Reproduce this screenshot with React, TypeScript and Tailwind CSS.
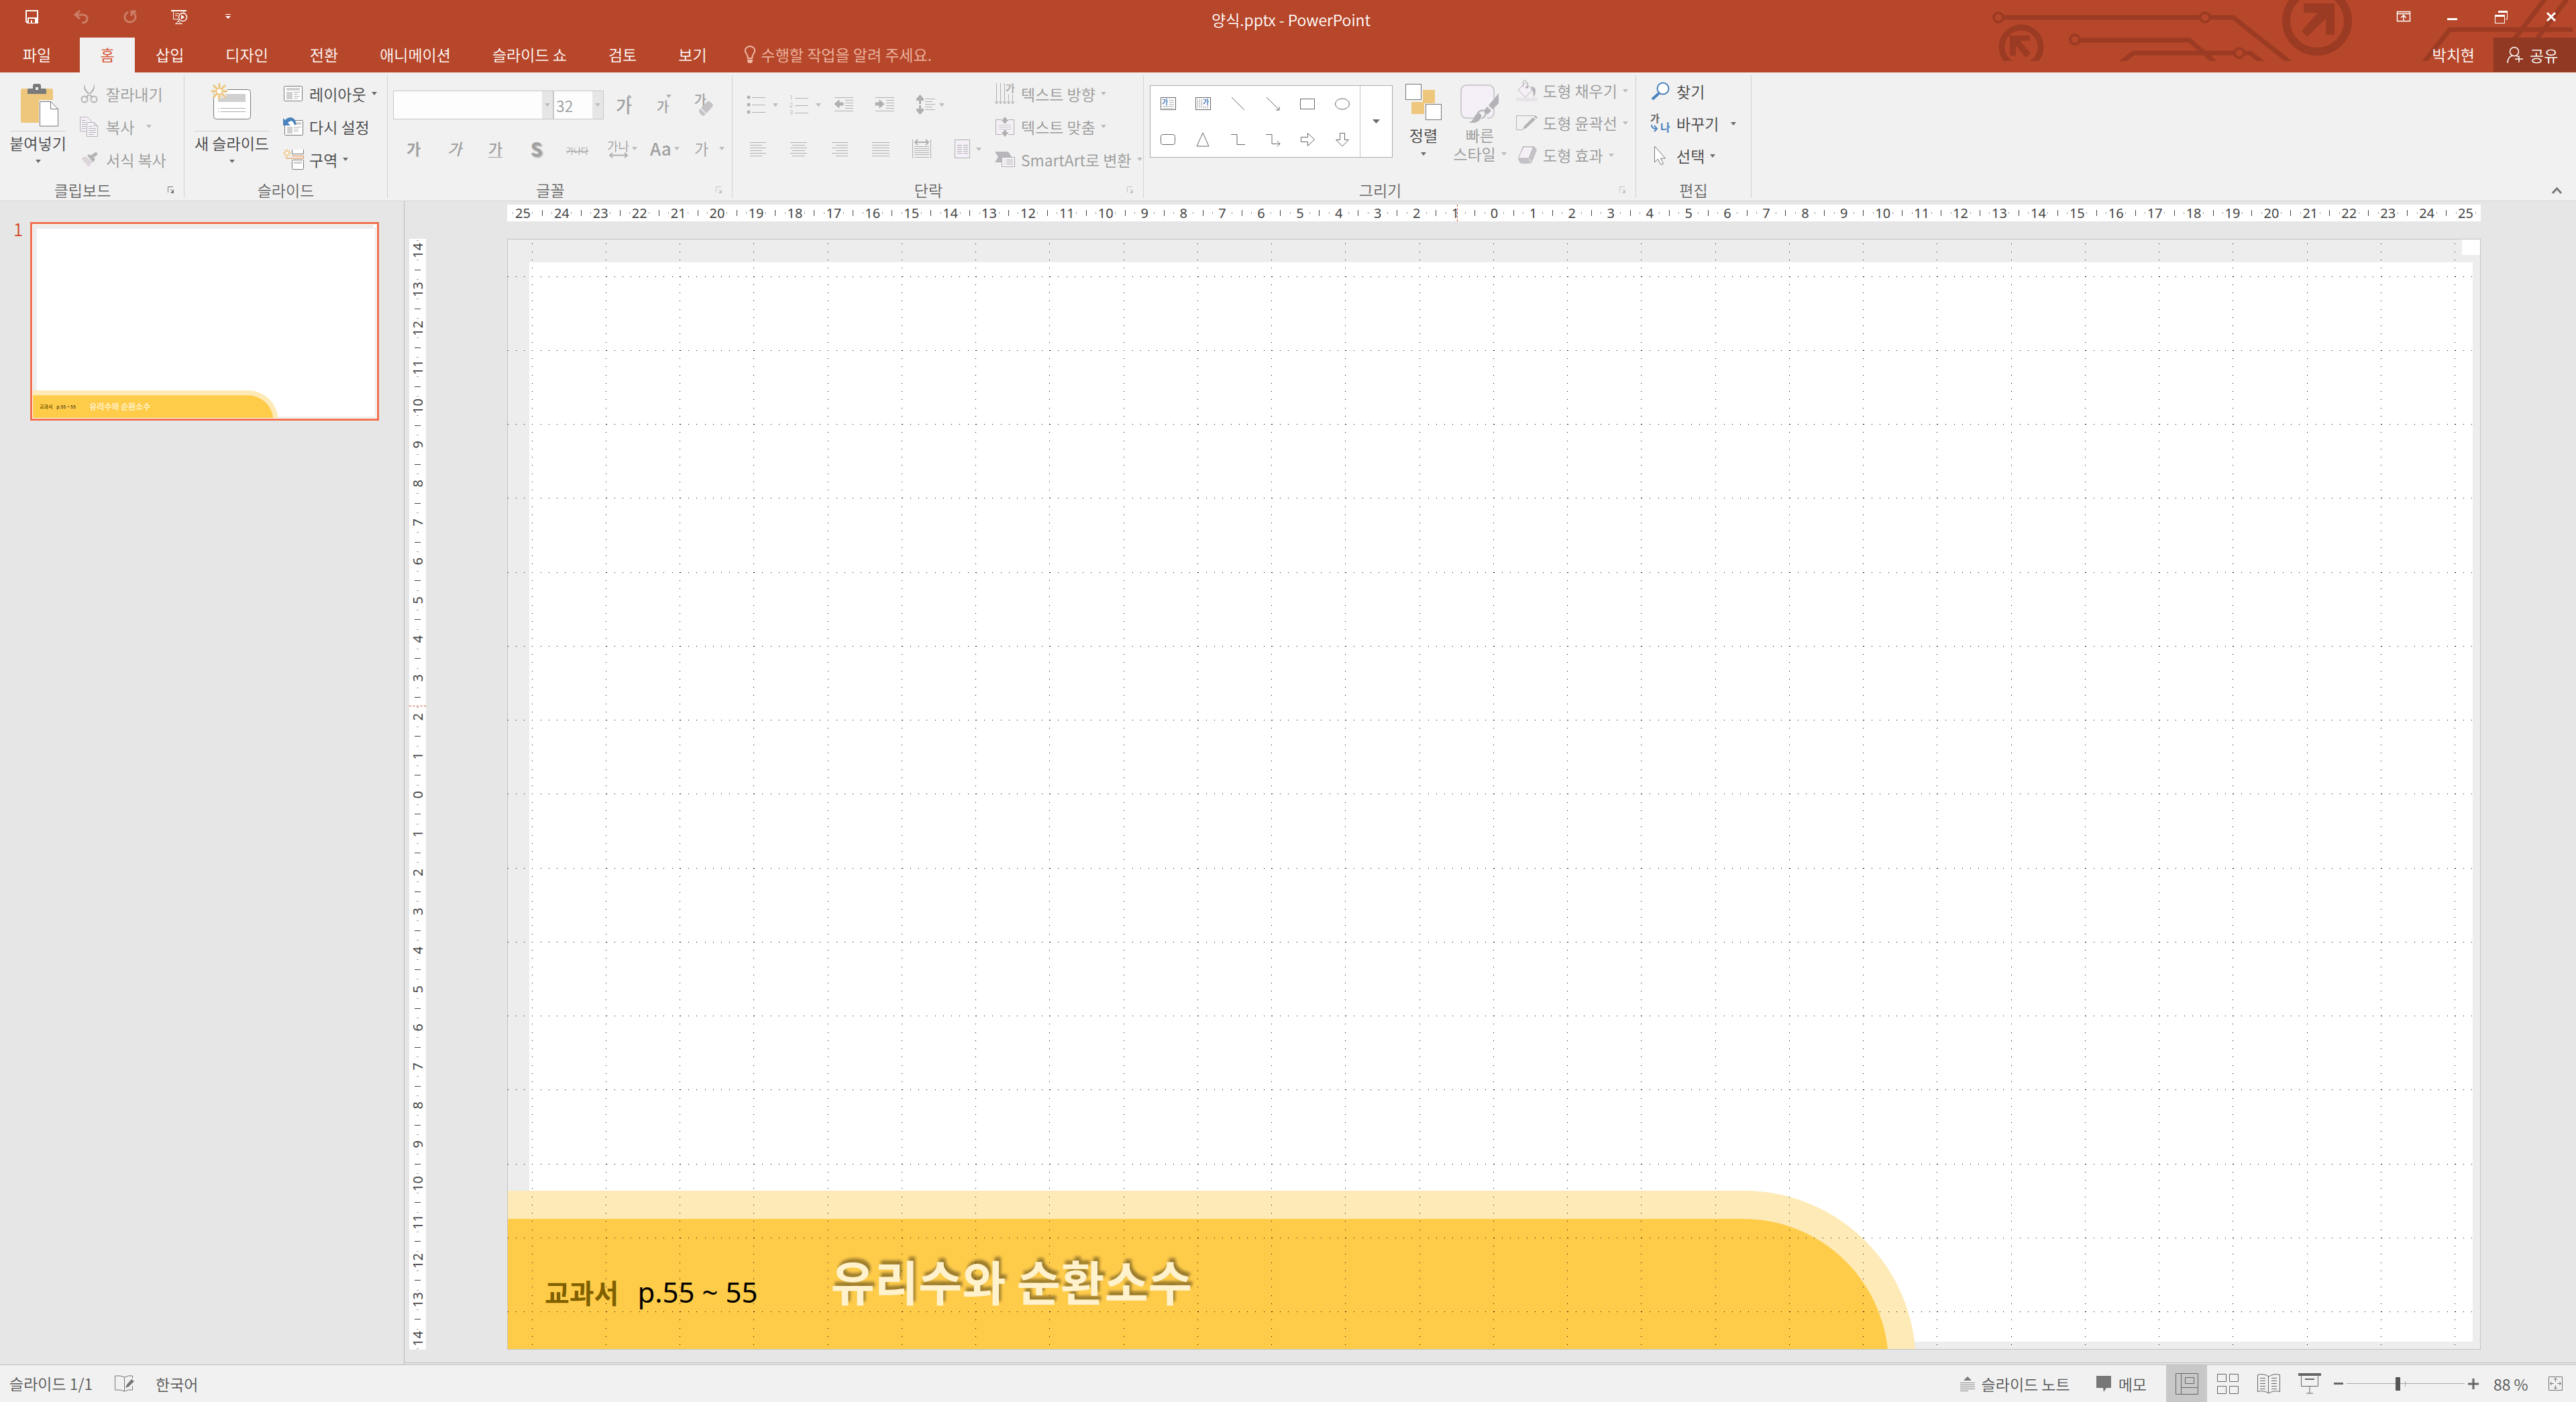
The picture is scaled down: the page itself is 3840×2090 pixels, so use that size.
import type { ReactNode } from 'react';

const menuTabs = ['삽입', '디자인', '전환', '애니메이션', '슬라이드 쇼', '검토', '보기'];

const horizontalMarks = Array.from({ length: 51 }, (_, i) => Math.abs(i - 25));
const verticalMarks = Array.from({ length: 29 }, (_, i) => Math.abs(i - 14));

const gridColumns = Array.from({ length: 27 }, (_, i) => 36 + i * 110.25);
const gridRows = Array.from({ length: 15 }, (_, i) => 55 + i * 110.25);

type IconProps = { w: number; h: number; children: ReactNode; className?: string };

const Icon = ({ w, h, children, className }: IconProps) => (
  <svg
    width={w}
    height={h}
    viewBox={`0 0 ${w} ${h}`}
    fill="none"
    className={`shrink-0 overflow-visible ${className ?? ''}`}
    aria-hidden="true"
  >
    {children}
  </svg>
);

const Arrow = ({ off = false }: { off?: boolean }) => (
  <Icon w={8} h={5}>
    <path d="M0 0h8L4 5z" fill={off ? '#bcbcbc' : '#6a6a6a'} />
  </Icon>
);

/* ---------- clipboard ---------- */

const PasteIcon = () => (
  <Icon w={60} h={64}>
    <rect x="4" y="8" width="48" height="51" rx="3" fill="#eec77d" />
    <path d="M14 16V10q0-2 2-2h6V4q0-3 3-3h6q3 0 3 3v4h6q2 0 2 2v6z" fill="#7a7a7a" />
    <rect x="26" y="6" width="4" height="4" fill="#f1f1f1" />
    <path d="M31 25h21l9 11v28H31z" fill="#f1f1f1" />
    <path d="M32.500 27.500h16l11 11v25.500h-27z" fill="#fff" stroke="#777" />
    <path d="M48.500 27.500v11h11" stroke="#777" />
  </Icon>
);

const CutIcon = () => (
  <Icon w={26} h={29}>
    <path d="M6 0q0 6 4 11l9 9-2 1-8-8Q3 8 6 0zM20 0q0 6-4 11l-9 9 2 1 8-8Q23 8 20 0z" fill="#b4b4b4" />
    <circle cx="6" cy="23" r="4.500" stroke="#b4b4b4" strokeWidth="2" />
    <circle cx="20" cy="23" r="4.500" stroke="#b4b4b4" strokeWidth="2" />
  </Icon>
);

const CopyIcon = () => (
  <Icon w={28} h={30}>
    <path d="M.5.5h11l5 5v16H.5z" fill="#f5f0f7" stroke="#b4b4b4" />
    <path d="M3 5.500h6M3 8.500h6M3 11.500h6M3 14.500h6M3 17.500h6" stroke="#b4b4b4" />
    <path d="M10.500 8.500h11l5 5v16h-16z" fill="#f5f0f7" stroke="#b4b4b4" />
    <path d="M21.500 8.500v5h5M13 14.500h6M13 17.500h11M13 20.500h11M13 23.500h11M13 26.500h8" stroke="#b4b4b4" />
  </Icon>
);

const PainterIcon = () => (
  <Icon w={26} h={22}>
    <path d="M1 9l6-3 11 8-6 8z" fill="#dcd6dc" />
    <path d="M10 5l3-2 9 7-3 5z" fill="#b4b4b4" />
    <path d="M15 5l7-5q4 0 3 4l-7 5z" fill="#b4b4b4" />
  </Icon>
);

/* ---------- slides ---------- */

const NewSlideIcon = () => (
  <Icon w={62} h={58}>
    <rect x="3.500" y="9.500" width="55" height="44" rx="4" fill="#fff" stroke="#777" />
    <rect x="10" y="16" width="41" height="12" fill="#d0d0d0" />
    <path d="M10 37.500h2M14 37.500h37M10 42.500h2M14 42.500h37" stroke="#b0b0b0" />
    <path d="M12 0v24M0 12h24M3 3l18 18M21 3L3 21" stroke="#f1f1f1" strokeWidth="6" />
    <path d="M12 0v24M0 12h24M3 3l18 18M21 3L3 21" stroke="#edc57a" strokeWidth="3" />
    <circle cx="12" cy="12" r="4" fill="#fff" stroke="#edc57a" />
  </Icon>
);

const LayoutIcon = () => (
  <Icon w={28} h={24}>
    <rect x=".5" y=".5" width="27" height="22" rx="1" fill="#fff" stroke="#777" />
    <path d="M4 3h20v4H4zM4 9h9v11H4z" fill="#d0d0d0" />
    <path d="M15 9.500h9M15 12.500h6M15 15.500h9M15 18.500h6" stroke="#b0b0b0" />
  </Icon>
);

const ResetIcon = () => (
  <Icon w={31} h={28}>
    <rect x="2.500" y="4.500" width="27" height="22" rx="1" fill="#fff" stroke="#777" />
    <path d="M16 7h11v4H16zM6 14h8v10H6z" fill="#d0d0d0" />
    <path d="M16 14.500h11M16 17.500h7M16 20.500h7" stroke="#b0b0b0" />
    <path d="M0 1v11h11l-4-4q6-6 9 1l1 2h3Q18 0 11 0 7 0 3 4z" fill="#4a82bd" />
  </Icon>
);

const SectionIcon = () => (
  <Icon w={31} h={31}>
    <path d="M13.500 1v6.500h17V1" fill="#fff" stroke="#777" />
    <path d="M13 10.500h17.500v3.500H4.500v-2" stroke="#e08b45" />
    <rect x="13.500" y="16.500" width="17" height="14" rx="1" fill="#fff" stroke="#777" />
    <path d="M16 19h12v3H16z" fill="#d0d0d0" />
    <path d="M6 0v12M0 6h12M2 2l8 8M10 2l-8 8" stroke="#edc57a" strokeWidth="1.500" />
    <circle cx="6" cy="6" r="2" fill="#fff" />
  </Icon>
);

/* ---------- font ---------- */

const EraserIcon = () => (
  <Icon w={24} h={24}>
    <path d="M13 3q2-3 5 0l3 3q2 2 0 4L12 20 4 12z" fill="#c4c2c6" />
    <path d="M3 13l8 8-2 2q-2 1-4 0l-3-4q-2-2-1-4z" fill="#c4c2c6" />
  </Icon>
);

/* ---------- paragraph ---------- */

const BulletsIcon = () => (
  <Icon w={28} h={28}>
    <g fill="#b0b0b0">
      <circle cx="3" cy="3" r="2.500" />
      <circle cx="3" cy="14" r="2.500" />
      <circle cx="3" cy="25" r="2.500" />
    </g>
    <path d="M8 3.500h20M8 14.500h20M8 25.500h20" stroke="#b0b0b0" />
  </Icon>
);

const NumberingIcon = () => (
  <Icon w={28} h={30}>
    <g fill="#a0a0a0" fontSize="9" fontFamily="Noto Sans">
      <text x="0" y="8">1</text>
      <text x="0" y="19">2</text>
      <text x="0" y="30">3</text>
    </g>
    <path d="M8 5.500h20M8 16.500h20M8 27.500h20" stroke="#b0b0b0" />
  </Icon>
);

const IndentIcon = ({ back = false }: { back?: boolean }) => (
  <Icon w={28} h={22}>
    <path d="M0 .5h28M16 4.500h12M16 8.500h12M16 12.500h12M16 16.500h12M0 20.500h28" stroke="#b0b0b0" />
    <path
      d={back ? 'M0 10l7-6v4h6v4H7v4z' : 'M13 10L6 4v4H0v4h6v4z'}
      fill="#b0b0b0"
      stroke="#b0b0b0"
    />
  </Icon>
);

const LineSpacingIcon = () => (
  <Icon w={28} h={30}>
    <path d="M5.500 0L0 6v3h4v5h3V9h4V6zM5.500 30L0 24v-3h4v-5h3v5h4v3z" fill="#b0b0b0" />
    <path d="M13 6.500h15M13 10.500h11M13 14.500h15M13 18.500h11M13 22.500h15" stroke="#b0b0b0" />
  </Icon>
);

const alignLines = {
  left: 'M2 1.500h24M2 5.500h18M2 9.500h24M2 13.500h18M2 17.500h24M2 21.500h18',
  center: 'M1 1.500h25M4 5.500h19M1 9.500h25M4 13.500h19M1 17.500h25M4 21.500h19',
  right: 'M2 1.500h24M8 5.500h18M2 9.500h24M8 13.500h18M2 17.500h24M8 21.500h18',
  justify: 'M1 1.500h26M1 5.500h26M1 9.500h26M1 13.500h26M1 17.500h26M1 21.500h26',
};

const AlignIcon = ({ kind }: { kind: keyof typeof alignLines }) => (
  <Icon w={28} h={23}>
    <path d={alignLines[kind]} stroke="#b0b0b0" />
  </Icon>
);

const DistributeIcon = () => (
  <Icon w={28} h={28}>
    <path d="M.5 0v28M27.500 0v28M3 10.500h22M3 13.500h22M3 16.500h22M3 19.500h22M3 22.500h22M3 26.500h22" stroke="#b0b0b0" />
    <path d="M4 4h20M8 0L4 4l4 4M20 0l4 4-4 4" stroke="#b0b0b0" strokeWidth="2" />
  </Icon>
);

const ColumnsIcon = () => (
  <Icon w={28} h={28}>
    <rect x="2.500" y=".5" width="22" height="27" fill="#f5f0f7" stroke="#b0b0b0" />
    <path
      d="M6 8.500h7M15 8.500h7M6 11.500h7M15 11.500h7M6 14.500h7M15 14.500h7M6 17.500h7M15 17.500h7M6 20.500h7M15 20.500h7"
      stroke="#b0b0b0"
    />
  </Icon>
);

const TextDirectionIcon = () => (
  <Icon w={30} h={32}>
    <path d="M2.500 0v30M8.500 0v30M14.500 0v30M20.500 17v13M26.500 17v13" stroke="#b0b0b0" />
    <path d="M0 27l2.500 4L5 27M6 27l2.500 4 2.500-4M12 27l2.500 4 2.500-4M18 27l2.500 4 2.500-4M24 27l2.500 4 2.500-4" stroke="#b0b0b0" />
    <text x="16" y="13" fontSize="15" fontWeight="700" fill="#b0b0b0">가</text>
  </Icon>
);

const TextAlignIcon = () => (
  <Icon w={30} h={30}>
    <rect x="1.500" y="4.500" width="27" height="22" fill="#f5f0f7" stroke="#b0b0b0" />
    <path d="M6 12.500h18M6 15.500h18M6 18.500h18" stroke="#c8c8c8" />
    <path d="M10 1h10v8H10zM10 22h10v8H10z" fill="#f1f1f1" />
    <path d="M15 0l-5 6v1h3v3h4V7h3V6zM15 30l-5-6v-1h3v-3h4v3h3v1z" fill="#b0b0b0" />
  </Icon>
);

const SmartArtIcon = () => (
  <Icon w={30} h={24}>
    <path d="M0 0h20l5 8H10v8H0l5-8z" fill="#b8b6ba" />
    <rect x="10.500" y="8.500" width="19" height="14" fill="#f5f0f7" stroke="#b0b0b0" />
    <path d="M14 12.500h1M17 12.500h10M14 15.500h1M17 15.500h10M14 18.500h1M17 18.500h10" stroke="#b0b0b0" />
  </Icon>
);

/* ---------- drawing ---------- */

const shapeIcons: { name: string; art: ReactNode }[] = [
  {
    name: '텍스트 상자',
    art: (
      <>
        <rect x="1.500" y="2.500" width="22" height="18" fill="#fff" />
        <text x="3" y="13" fontSize="10" fontWeight="700" fill="#4a82bd" stroke="none">가</text>
        <path d="M14 6.500h7M14 9.500h7M14 12.500h7M4 15.500h17M4 18.500h17" stroke="#b0b0b0" />
      </>
    ),
  },
  {
    name: '세로 텍스트 상자',
    art: (
      <>
        <rect x="1.500" y="2.500" width="22" height="18" fill="#fff" />
        <text x="12" y="13" fontSize="10" fontWeight="700" fill="#4a82bd" stroke="none">가</text>
        <path d="M4.500 5v13M7.500 5v13M10.500 5v13M13.500 15v4M16.500 15v4M19.500 15v4" stroke="#b0b0b0" />
      </>
    ),
  },
  { name: '선', art: <path d="M3 2l19 19" /> },
  { name: '화살표', art: <path d="M3 2l19 19M22 16v5h-5" /> },
  { name: '직사각형', art: <rect x="1.500" y="4.500" width="21" height="15" /> },
  { name: '타원', art: <ellipse cx="12" cy="12" rx="10.500" ry="8" /> },
  { name: '둥근 직사각형', art: <rect x="1.500" y="4.500" width="21" height="15" rx="3" /> },
  { name: '삼각형', art: <path d="M12 2l9 20H3z" /> },
  { name: '꺾인 연결선', art: <path d="M2 4.500h9v15h12" /> },
  { name: '꺾인 화살표', art: <path d="M2 4.500h9v14h12M19 14l4 4.500-4 4" /> },
  { name: '오른쪽 화살표', art: <path d="M2.500 8.500h10v-6l10 9.500-10 9.500v-6h-10z" /> },
  { name: '아래쪽 화살표', art: <path d="M8.500 2.500h7v10h6L12 22 2.500 12.500h6z" /> },
];

const ArrangeIcon = () => (
  <Icon w={56} h={56}>
    <path d="M26 10h19v21H26v15H10V26h16z" fill="#eec77d" />
    <path d="M0 0h27v28H0zM29 30h27v26H29z" fill="#f1f1f1" />
    <path d="M27 10h18v20H29v16H10V28h17z" fill="#eec77d" />
    <rect x="1.500" y="1.500" width="23" height="23" fill="#fff" stroke="#777" />
    <rect x="31.500" y="31.500" width="23" height="23" fill="#fff" stroke="#777" />
  </Icon>
);

const QuickStyleIcon = () => (
  <Icon w={58} h={60}>
    <rect x="1" y="1" width="49" height="49" rx="8" fill="#f5f0f7" stroke="#c0bec2" strokeWidth="1.500" />
    <path d="M58 12L33 38 12 58h22q8-5 6-14L58 26z" fill="#f1f1f1" />
    <path d="M57 13v15L48 37l-6-6zM40 33l6 6-6 6-5-6z" fill="#b4b2b6" />
    <path d="M12 57q6-2 9-9 2-5 8-5 4 3 1 8-4 6-11 6z" fill="#b4b2b6" />
    <path d="M25 44q5-8 12-4 2 7-5 11" stroke="#b4b2b6" strokeWidth="2" />
  </Icon>
);

const FillIcon = () => (
  <Icon w={32} h={32}>
    <path d="M3 15L14 4l10 11-10 11z" fill="#f5f0f7" stroke="#b4b2b6" />
    <path d="M10.500 11V3q0-3 3-2t4 5v5" stroke="#b4b2b6" />
    <circle cx="16" cy="11" r="2" fill="#b4b2b6" />
    <path d="M22 10q7 0 7 7 0 5-3 9 0-9-4-16z" fill="#b4b2b6" />
    <rect x="0" y="27" width="32" height="5" fill="#e8e3e8" />
  </Icon>
);

const OutlineIcon = () => (
  <Icon w={32} h={22}>
    <path d="M28 .5H.5v21h10" stroke="#b4b2b6" />
    <path d="M25 3l4 3-14 13-5 2 2-5z" fill="#b4b2b6" />
    <path d="M27 2l2-2 3 3-2 2z" fill="#b4b2b6" />
  </Icon>
);

const EffectsIcon = () => (
  <Icon w={32} h={28}>
    <path d="M10 1h16q3 1 5 6l-8 19-5 1H8q-3-1-5-7z" fill="#c4c2c6" />
    <path d="M11 2h14q1 0 0 2l-6 15H5q-2 0-1-2z" fill="#f5f0f7" stroke="#b4b2b6" />
    <path d="M19 19l3 6" stroke="#f1f1f1" />
  </Icon>
);

/* ---------- editing ---------- */

const FindIcon = () => (
  <Icon w={28} h={28}>
    <circle cx="18" cy="10" r="8.500" fill="#fff" stroke="#4a82bd" strokeWidth="2" />
    <path d="M12 17L2 26" stroke="#4a82bd" strokeWidth="4" />
  </Icon>
);

const ReplaceIcon = () => (
  <Icon w={30} h={30}>
    <text x="0" y="13" fontSize="15" fontWeight="700" fill="#666">가</text>
    <text x="15" y="27" fontSize="16" fontWeight="700" fill="#4a82bd">나</text>
    <path d="M2 17q0 6 7 6M6 18l4 5-4 4" stroke="#4a82bd" strokeWidth="2" />
  </Icon>
);

const SelectIcon = () => (
  <Icon w={20} h={30}>
    <path d="M1.500 1v24l5-5 4 8q3 1 4-1l-4-8h7z" fill="#fff" stroke="#777" />
  </Icon>
);

/* ---------- building blocks of the ribbon ---------- */

type GroupProps = { label: string; width: string; launcher?: 'on' | 'off'; children: ReactNode };

const Group = ({ label, width, launcher, children }: GroupProps) => (
  <section className={`flex shrink-0 flex-col border-r border-[#d2d2d2] ${width}`} aria-label={label}>
    <div className="flex h-[159px]">{children}</div>
    <div className="flex h-6 items-center">
      <span className="flex-1 text-center leading-6 text-[#666]">{label}</span>
      {launcher && (
        <button className="flex w-7 pl-1" aria-label={`${label} 옵션`}>
          <Icon w={10} h={10} className={launcher === 'on' ? 'text-[#777]' : 'text-[#c4c4c4]'}>
            <path d="M.5 9V.5H8M4 4l4 4" stroke="currentColor" />
            <path d="M9 4v6H4z" fill="currentColor" />
          </Icon>
        </button>
      )}
    </div>
  </section>
);

type RowProps = { icon: ReactNode; label: string; off?: boolean; menu?: boolean; iconBox?: string; wide?: boolean };

const RowButton = ({ icon, label, off = false, menu = false, iconBox = 'w-8', wide = false }: RowProps) => (
  <button className={`flex items-center gap-2 whitespace-nowrap ${off ? 'text-[#999]' : 'text-[#444]'}`} disabled={off}>
    <span className={`flex justify-center ${iconBox}`}>{icon}</span>
    <span className={wide ? 'mr-[10px]' : ''}>{label}</span>
    {menu && <Arrow off={off} />}
  </button>
);

const ToolButton = ({ label, box, menu = false, children }: { label: string; box: string; menu?: boolean; children: ReactNode }) => (
  <button className={`flex shrink-0 items-center text-[#a0a0a0] ${box}`} aria-label={label} disabled>
    {children}
    {menu && <Arrow off />}
  </button>
);

const ClipboardGroup = () => (
  <Group label="클립보드" width="w-[275px]" launcher="on">
    <button className="ml-[15px] flex w-[83px] flex-col items-center whitespace-nowrap pt-1 text-[#444]">
      <span className="flex h-20 w-full items-center justify-center border-b border-[#d2d2d2]">
        <PasteIcon />
      </span>
      <span className="leading-[34px]">붙여넣기</span>
      <span className="mt-2">
        <Arrow />
      </span>
    </button>
    <div className="ml-[18px] grid h-[150px] grid-rows-3 pt-[3px]">
      <RowButton icon={<CutIcon />} label="잘라내기" off iconBox="w-[34px]" />
      <RowButton icon={<CopyIcon />} label="복사" off menu wide iconBox="w-[34px]" />
      <RowButton icon={<PainterIcon />} label="서식 복사" off iconBox="w-[34px]" />
    </div>
  </Group>
);

const SlidesGroup = () => (
  <Group label="슬라이드" width="w-[303px]">
    <button className="ml-[15px] flex w-[111px] flex-col items-center whitespace-nowrap pt-1 text-[#444]">
      <span className="flex h-20 w-full justify-center border-b border-[#d2d2d2] pt-2">
        <NewSlideIcon />
      </span>
      <span className="leading-[34px]">새 슬라이드</span>
      <span className="mt-2">
        <Arrow />
      </span>
    </button>
    <div className="ml-5 grid h-[150px] grid-rows-3 pt-[3px]">
      <RowButton icon={<LayoutIcon />} label="레이아웃" menu />
      <RowButton icon={<ResetIcon />} label="다시 설정" />
      <RowButton icon={<SectionIcon />} label="구역" menu />
    </div>
  </Group>
);

const FontGroup = () => (
  <Group label="글꼴" width="w-[514px]" launcher="off">
    <div className="pl-2 pt-[23px]">
      <div className="flex">
        <div className="flex h-[43px] w-[239px] border border-[#c6c6c6] bg-[#fdfdfd]">
          <select className="min-w-0 flex-1 appearance-none" aria-label="글꼴" disabled />
          <span className="flex w-4 items-center justify-center bg-[#e6e6e6]">
            <Arrow off />
          </span>
        </div>
        <div className="flex h-[43px] w-[75px] border border-[#c6c6c6] bg-[#fdfdfd]">
          <select className="min-w-0 flex-1 appearance-none pl-[3px] text-[#999] opacity-100" aria-label="글꼴 크기" disabled>
            <option>32</option>
          </select>
          <span className="flex w-4 items-center justify-center bg-[#e6e6e6]">
            <Arrow off />
          </span>
        </div>
        <ToolButton label="글꼴 크기 크게" box="w-[60px] justify-center">
          <span className="text-[26px] font-medium">가</span>
          <Icon w={8} h={5} className="-ml-2 mb-7">
            <path d="M0 5h8L4 0z" fill="#b0b0b0" />
          </Icon>
        </ToolButton>
        <ToolButton label="글꼴 크기 작게" box="w-[60px] justify-center">
          <span className="pt-1 text-xl font-medium">가</span>
          <Icon w={8} h={5} className="-ml-1 mb-7">
            <path d="M0 0h8L4 5z" fill="#b0b0b0" />
          </Icon>
        </ToolButton>
        <ToolButton label="서식 지우기" box="w-[60px] justify-center">
          <span className="mb-4 text-xl font-medium">가</span>
          <span className="-ml-3 mt-2">
            <EraserIcon />
          </span>
        </ToolButton>
      </div>
      <div className="mt-5 flex h-11">
        <ToolButton label="굵게" box="w-[61px] justify-center">
          <span className="font-bold">가</span>
        </ToolButton>
        <ToolButton label="기울임꼴" box="w-[61px] justify-center">
          <span className="font-medium italic">가</span>
        </ToolButton>
        <ToolButton label="밑줄" box="w-[61px] justify-center">
          <span className="border-b border-[#a0a0a0] font-medium leading-[26px]">가</span>
        </ToolButton>
        <ToolButton label="텍스트 그림자" box="w-[61px] justify-center">
          <span className="text-[28px] font-bold [text-shadow:2px_2px_2px_rgba(0,0,0,0.3)]">S</span>
        </ToolButton>
        <ToolButton label="취소선" box="w-[61px] justify-center">
          <span className="pt-2 text-xs line-through">가나다</span>
        </ToolButton>
        <ToolButton label="문자 간격" box="w-[64px] gap-1 pl-[14px]" menu>
          <span className="flex flex-col items-center">
            <span className="text-lg leading-5">가나</span>
            <Icon w={28} h={9}>
              <path d="M1 4.500h26M5 1L1 4.500 5 8M23 1l4 3.500L23 8" stroke="#b0b0b0" strokeWidth="2" />
            </Icon>
          </span>
        </ToolButton>
        <ToolButton label="대/소문자 바꾸기" box="w-[64px] gap-1 pl-[14px]" menu>
          <span className="text-[26px] font-medium">Aa</span>
        </ToolButton>
        <ToolButton label="글꼴 색" box="w-[70px] gap-4 pl-4" menu>
          <span>가</span>
        </ToolButton>
      </div>
    </div>
  </Group>
);

const ParagraphGroup = () => (
  <Group label="단락" width="w-[613px]" launcher="off">
    <div className="w-[390px] pt-[22px]">
      <div className="flex h-11 pl-[21px]">
        <ToolButton label="글머리 기호" box="gap-[11px]" menu>
          <BulletsIcon />
        </ToolButton>
        <ToolButton label="번호 매기기" box="ml-[17px] gap-[11px]" menu>
          <NumberingIcon />
        </ToolButton>
        <ToolButton label="목록 수준 줄임" box="ml-5">
          <IndentIcon back />
        </ToolButton>
        <ToolButton label="목록 수준 늘림" box="ml-[33px]">
          <IndentIcon />
        </ToolButton>
        <ToolButton label="줄 간격" box="ml-[33px] gap-[6px]" menu>
          <LineSpacingIcon />
        </ToolButton>
      </div>
      <div className="mt-[22px] flex h-11 gap-[33px] pl-[24px]">
        <ToolButton label="왼쪽 맞춤" box="">
          <AlignIcon kind="left" />
        </ToolButton>
        <ToolButton label="가운데 맞춤" box="">
          <AlignIcon kind="center" />
        </ToolButton>
        <ToolButton label="오른쪽 맞춤" box="">
          <AlignIcon kind="right" />
        </ToolButton>
        <ToolButton label="양쪽 맞춤" box="">
          <AlignIcon kind="justify" />
        </ToolButton>
        <ToolButton label="균등 분할" box="">
          <DistributeIcon />
        </ToolButton>
        <ToolButton label="열 추가 또는 제거" box="gap-[6px]" menu>
          <ColumnsIcon />
        </ToolButton>
      </div>
    </div>
    <div className="grid h-[150px] grid-rows-3 pt-[3px]">
      <RowButton icon={<TextDirectionIcon />} label="텍스트 방향" off menu />
      <RowButton icon={<TextAlignIcon />} label="텍스트 맞춤" off menu />
      <RowButton icon={<SmartArtIcon />} label="SmartArt로 변환" off menu />
    </div>
  </Group>
);

const DrawingGroup = () => (
  <Group label="그리기" width="w-[734px]" launcher="off">
    <div className="ml-[9px] mt-[15px] flex h-[108px] w-[362px] border border-[#ababab] bg-white">
      <div className="grid flex-1 grid-cols-6 grid-rows-2">
        {shapeIcons.map(({ name, art }) => (
          <button key={name} className="flex items-center justify-center" aria-label={name}>
            <Icon w={25} h={24}>
              <g stroke="#666">{art}</g>
            </Icon>
          </button>
        ))}
      </div>
      <button className="flex w-12 items-center justify-center border-l border-[#c6c6c6]" aria-label="도형 더 보기">
        <Icon w={11} h={6}>
          <path d="M0 0h11L5.500 6z" fill="#6a6a6a" />
        </Icon>
      </button>
    </div>
    <button className="ml-4 flex w-[60px] flex-col items-center pt-3 text-[#444]">
      <ArrangeIcon />
      <span className="mt-[5px] leading-8">정렬</span>
      <span className="mt-[10px]">
        <Arrow />
      </span>
    </button>
    <button className="ml-3 flex w-[84px] flex-col items-center pt-[14px] text-[#999]" disabled>
      <QuickStyleIcon />
      <span className="mt-px leading-7">빠른</span>
      <span className="flex items-center gap-2 leading-7">
        스타일
        <Arrow off />
      </span>
    </button>
    <div className="-mt-px ml-3 grid h-36 grid-rows-3">
      <RowButton icon={<FillIcon />} label="도형 채우기" off menu />
      <RowButton icon={<OutlineIcon />} label="도형 윤곽선" off menu />
      <RowButton icon={<EffectsIcon />} label="도형 효과" off menu />
    </div>
  </Group>
);

const EditingGroup = () => (
  <Group label="편집" width="w-[172px]">
    <div className="ml-5 grid h-36 grid-rows-3">
      <RowButton icon={<FindIcon />} label="찾기" />
      <RowButton icon={<ReplaceIcon />} label="바꾸기" menu wide />
      <RowButton icon={<SelectIcon />} label="선택" menu />
    </div>
  </Group>
);

/* ---------- title bar ---------- */

const CircuitArt = () => (
  <svg
    className="pointer-events-none absolute right-0 top-0 text-[#9c3b23]"
    width="900"
    height="91"
    viewBox="0 0 900 91"
    fill="none"
    stroke="currentColor"
    strokeWidth="7"
    aria-hidden="true"
  >
    <path d="M46 26h294M354 26h35l91 72M160 60h164l46 40M218 96l22-17h151M405 79h9l24 18" />
    <path d="M670 97l42-53h183M807 60l50-66M840 60l50-66" />
    <g strokeWidth="4">
      <circle cx="39" cy="26" r="7" />
      <circle cx="347" cy="26" r="7" />
      <circle cx="153" cy="59" r="7" />
      <circle cx="398" cy="79" r="7" />
    </g>
    <circle cx="73" cy="70" r="29" strokeWidth="9" />
    <circle cx="514" cy="31" r="46" strokeWidth="12" />
    <path d="M56 53h30v8H71l16 18-7 7-15-18v15h-9zM494 5h46v47h-13V28l-28 27-8-9 24-27h-21z" fill="currentColor" stroke="none" />
  </svg>
);

const TitleBar = () => (
  <header className="relative bg-[#b7472a] text-white">
    <CircuitArt />
    <div className="relative flex h-14 items-start">
      <div className="flex flex-1 items-start pl-[38px] pt-[15px]">
        <button aria-label="저장">
          <Icon w={20} h={20}>
            <path d="M1 1h17v18H3l-2-2z" stroke="#fff" strokeWidth="2" />
            <path d="M3 11h14v8H3z" fill="#fff" />
            <path d="M5 13h9v6h-4v-4H8v4H5z" fill="#b7472a" />
          </Icon>
        </button>
        <button className="ml-[52px]" aria-label="실행 취소" disabled>
          <Icon w={22} h={20}>
            <path d="M9 1L2 7l7 6M2 7h11q7 0 7 6t-8 6" stroke="#cc7d66" strokeWidth="3" />
          </Icon>
        </button>
        <button className="ml-[52px]" aria-label="다시 실행" disabled>
          <Icon w={20} h={20}>
            <path d="M7 3q-6 3-5 9 2 6 8 6 7-1 8-7 0-6-5-8M12 9V2h7" stroke="#cc7d66" strokeWidth="3" />
          </Icon>
        </button>
        <button className="ml-[51px]" aria-label="처음부터 시작">
          <Icon w={24} h={22}>
            <path d="M0 1h23" stroke="#fff" strokeWidth="2" />
            <path d="M3.500 2v11.500h7M6 5.500h6M6 8.500h4M19 2v2M11 14v4M6 20.500h11M8 20l3-4 3 4" stroke="#fff" />
            <circle cx="17.500" cy="10.500" r="6" stroke="#fff" strokeWidth="1.500" />
            <path d="M15 7v7l5-3.500z" fill="#fff" />
          </Icon>
        </button>
        <button className="ml-[57px] mt-[6px]" aria-label="빠른 실행 도구 모음 사용자 지정">
          <Icon w={8} h={8}>
            <path d="M0 0h8v1H0zM0 3h8L4 7z" fill="#fff" />
          </Icon>
        </button>
      </div>
      <h1 className="leading-[58px]">양식.pptx - PowerPoint</h1>
      <div className="flex flex-1 justify-end pr-[29px] pt-4">
        <button aria-label="리본 메뉴 표시 옵션">
          <Icon w={20} h={20}>
            <path d="M.5 1.500h19v14H.5zM0 4.500h20M10 7v9M6 10.500l4-4 4 4" stroke="#fff" strokeWidth="1.500" />
          </Icon>
        </button>
        <button className="ml-[55px]" aria-label="최소화">
          <Icon w={15} h={20}>
            <path d="M0 11h15v3H0z" fill="#fff" />
          </Icon>
        </button>
        <button className="ml-14" aria-label="이전 크기로 복원">
          <Icon w={20} h={20}>
            <path d="M5 0h14v13h-3v-1h2V3H5zM0 6h15v13H0zM1 9v9h13V9z" fill="#fff" fillRule="evenodd" />
          </Icon>
        </button>
        <button className="ml-14" aria-label="닫기">
          <Icon w={16} h={20}>
            <path d="M2 3l12 12M14 3L2 15" stroke="#fff" strokeWidth="3" />
          </Icon>
        </button>
      </div>
    </div>
    <nav className="relative flex h-[52px] items-stretch leading-[50px]">
      <button className="w-[110px] pb-[2px]">파일</button>
      <button className="ml-[9px] w-[82px] bg-[#f1f1f1] pb-[2px] text-[#d24726]">홈</button>
      {menuTabs.map((tab) => (
        <button key={tab} className="px-[31px] pb-[2px]">
          {tab}
        </button>
      ))}
      <label className="ml-6 flex flex-1 items-center gap-2 pb-[2px] text-[#eeb9a5]">
        <Icon w={18} h={26}>
          <path d="M6 19q0-4-3-8Q0 6 4 3q5-4 10 0 4 3 1 8-3 4-3 8z" stroke="currentColor" strokeWidth="2" />
          <path d="M5 21h8v3l-2 2H7l-2-2z" fill="currentColor" />
        </Icon>
        <input
          className="h-full flex-1 bg-transparent placeholder:text-[#eeb9a5] placeholder:opacity-100"
          placeholder="수행할 작업을 알려 주세요."
          aria-label="수행할 작업"
        />
      </label>
      <button className="px-7 pb-[2px]">박치현</button>
      <button className="mb-px flex w-[123px] items-center gap-[10px] bg-[#913922] pl-5">
        <Icon w={24} h={26}>
          <circle cx="11" cy="8" r="6.500" stroke="#fff" strokeWidth="1.500" />
          <path d="M1 25q0-9 7-11M18 14v10M12 19h12" stroke="#fff" strokeWidth="1.500" />
          <path d="M14 14l3 2" stroke="#fff" strokeWidth="1.500" />
        </Icon>
        공유
      </button>
    </nav>
  </header>
);

/* ---------- slide ---------- */

const SlideArt = ({ grid = false }: { grid?: boolean }) => (
  <svg className="block w-full" viewBox="0 0 2940 1654" aria-hidden="true">
    <rect width="2940" height="1654" fill="#ededed" />
    <rect x="32" y="34" width="2897" height="1609" fill="#fff" />
    <rect x="2913" width="27" height="23" fill="#fff" />
    <path d="M0 1418H1843A256 256 0 0 1 2098 1654H0z" fill="#feeab6" />
    <path d="M0 1460H1841A217 217 0 0 1 2057 1654H0z" fill="#ffcc4a" />
    {grid && (
      <g stroke="#000" strokeDasharray="1 11 1 11 1 11 1 12" shapeRendering="crispEdges">
        {gridColumns.map((x) => (
          <path key={x} d={`M${Math.floor(x)}.5 6V1654`} />
        ))}
        {gridRows.map((y) => (
          <path key={y} d={`M0 ${Math.floor(y)}.5H2929`} />
        ))}
      </g>
    )}
  </svg>
);

const Thumbnails = () => (
  <aside className="flex w-[603px] shrink-0 items-start border-r border-[#bdbdbd] pt-[31px]" aria-label="슬라이드 축소판">
    <span className="w-[45px] pl-5 text-[26px] leading-5 text-[#d24726]">1</span>
    <button className="relative w-[520px] border-[3px] border-[#f2704f] bg-white p-px" aria-label="슬라이드 1">
      <SlideArt />
      <span className="absolute bottom-[10px] left-[11px] flex items-center text-[7px] leading-4 text-black">
        <span className="font-bold text-[#7f6000]">교과서</span>
        <span className="ml-[6px] w-[49px] whitespace-nowrap text-left">p.55 ~ 55</span>
        <span className="text-xs leading-4 font-bold text-[#fff2cc]">유리수와 순환소수</span>
      </span>
    </button>
  </aside>
);

const Ruler = ({ vertical = false }: { vertical?: boolean }) => {
  const marks = vertical ? verticalMarks : horizontalMarks;
  return (
    <div
      className={`relative flex overflow-hidden bg-white font-['Noto_Sans',sans-serif] text-xl font-normal text-[#444] ${
        vertical ? 'h-full w-[25px] flex-col' : 'h-[25px] w-full'
      }`}
      aria-hidden="true"
    >
      <div className={vertical ? '-my-3 flex flex-1 flex-col' : '-mx-[6px] flex flex-1'}>
        {marks.map((mark, i) => (
          <div key={i} className={`flex flex-1 items-center ${vertical ? 'min-h-0 flex-col' : 'min-w-0'}`}>
            <span className={`shrink-0 bg-[#444] ${vertical ? 'h-px w-[9px]' : 'h-[9px] w-px'}`} />
            <span
              className={`m-auto flex shrink-0 items-center justify-between ${vertical ? 'h-[30px] flex-col' : 'w-[30px]'}`}
            >
              <span className={`bg-[#a0a0a0] ${vertical ? 'h-px w-[3px]' : 'h-[3px] w-px'}`} />
              <span className={vertical ? 'rotate-180 leading-[25px] [writing-mode:vertical-rl]' : 'leading-[25px]'}>{mark}</span>
              <span className={`bg-[#a0a0a0] ${vertical ? 'h-px w-[3px]' : 'h-[3px] w-px'}`} />
            </span>
          </div>
        ))}
      </div>
      {/* pointer position */}
      <span
        className={`absolute border-dashed border-[#d24726] ${
          vertical ? 'left-0 top-[42%] w-full border-t' : 'left-[48%] top-0 ml-1 h-full border-l'
        }`}
      />
    </div>
  );
};

const Workspace = () => (
  <main className="mb-[2px] grid flex-1 grid-cols-[25px_minmax(0,1fr)] grid-rows-[25px_auto] content-start gap-x-[121px] gap-y-[26px] border-b border-[#bdbdbd] pb-[19px] pl-[7px] pr-[142px] pt-[5px]">
    <div />
    <Ruler />
    <Ruler vertical />
    <div className="relative border border-[#c3c3c3]">
      <SlideArt grid />
      <div className="absolute bottom-[31px] left-[55px] flex items-center text-[40px] leading-[72px]">
        <span className="font-bold text-[#7f6000]">교과서</span>
        <span className="ml-[28px] w-[288px] whitespace-nowrap font-['Noto_Sans',sans-serif] text-[42px] font-normal text-black">
          p.55 ~ 55
        </span>
        <span className="mb-9 text-[71px] font-bold text-[#fff2cc] [text-shadow:3px_-6px_4px_rgba(0,0,0,0.4)]">
          유리수와 순환소수
        </span>
      </div>
    </div>
  </main>
);

/* ---------- status bar ---------- */

const StatusBar = () => (
  <footer className="flex h-14 items-stretch border-t border-[#bdbdbd] bg-[#f1f1f1] text-[#555]">
    <span className="w-[171px] pl-[14px] leading-[54px]">슬라이드 1/1</span>
    <button aria-label="맞춤법 검사">
      <Icon w={30} h={26}>
        <path d="M14.500 3q-6-3-14-2v21q8-1 14 2 6-3 12-2v-6M14.500 3q6-3 12-2v4M14.500 3v21" stroke="#777" />
        <path d="M25 6l4 3-8 8-5 2 2-5z" fill="#777" />
      </Icon>
    </button>
    <button className="ml-[31px]">한국어</button>
    <div className="ml-auto flex items-center">
      <button className="flex items-center gap-[10px]">
        <Icon w={22} h={24}>
          <path d="M11 1l6 6H5z" fill="#777" />
          <path d="M0 10.500h22M0 13.500h22M0 16.500h22M0 19.500h22M0 22.500h12" stroke="#888" />
        </Icon>
        슬라이드 노트
      </button>
      <button className="ml-[38px] flex items-center gap-[10px]">
        <Icon w={24} h={26}>
          <path d="M1 1h22v18h-7l-4 6-1-6H1z" fill="#777" />
        </Icon>
        메모
      </button>
      <button className="ml-[29px] flex h-full w-[61px] items-center justify-center bg-[#c8c8c8]" aria-label="기본 보기">
        <Icon w={34} h={32}>
          <path d="M.5.5h33v31H.5zM8.500.5v31M8.500 21.500h25M14.500 6.500h13v9h-13z" stroke="#666" />
        </Icon>
      </button>
      <button className="flex w-[61px] justify-center" aria-label="여러 슬라이드">
        <Icon w={32} h={32}>
          <path d="M.5 1.500h13v11H.5zM18.500 1.500h13v11h-13zM.5 19.500h13v11H.5zM18.500 19.500h13v11h-13z" stroke="#666" />
        </Icon>
      </button>
      <button className="flex w-[61px] justify-center" aria-label="읽기용 보기">
        <Icon w={34} h={30}>
          <path d="M17 4Q9-1 .5 1.500v25Q9 24 17 29q8-5 16.500-2.500v-25Q25-1 17 4zM16.500 4v25" stroke="#666" />
          <path d="M4 6.500h8M4 10.500h8M4 14.500h8M4 18.500h8M4 22.500h8M21 6.500h8M21 10.500h8M21 14.500h8M21 18.500h8M21 22.500h8" stroke="#666" />
        </Icon>
      </button>
      <button className="flex w-[61px] justify-center" aria-label="슬라이드 쇼">
        <Icon w={34} h={31}>
          <path d="M0 0h34v4H0zM10 8h14v2H10z" fill="#666" />
          <path d="M4.500 4v15.500h25V4M17 20v10M12 30h10" stroke="#666" />
        </Icon>
      </button>
      <button className="ml-[6px]" aria-label="축소">
        <Icon w={14} h={16}>
          <path d="M0 6h14v3H0z" fill="#666" />
        </Icon>
      </button>
      <span className="relative mx-[5px] flex h-5 w-[176px] items-center">
        <span className="absolute left-[87px] h-2 w-px bg-[#a6a6a6]" />
        <input
          type="range"
          min="0"
          max="100"
          defaultValue="43"
          aria-label="확대/축소"
          className="relative h-5 w-full appearance-none bg-[linear-gradient(#a6a6a6,#a6a6a6)] bg-[length:100%_1px] bg-center bg-no-repeat [&::-webkit-slider-thumb]:h-5 [&::-webkit-slider-thumb]:w-[7px] [&::-webkit-slider-thumb]:appearance-none [&::-webkit-slider-thumb]:bg-[#555]"
        />
      </span>
      <button aria-label="확대">
        <Icon w={16} h={16}>
          <path d="M0 6.500h16v3H0zM6.500 0h3v16h-3z" fill="#666" />
        </Icon>
      </button>
      <button className="ml-[22px] w-[82px] text-left">88 %</button>
      <button className="mr-[20px]" aria-label="창에 맞추기">
        <Icon w={21} h={22}>
          <path d="M.5.5h20v20H.5zM10.500 3v5M10.500 13v5M3 10.500h5M13 10.500h5" stroke="#777" />
          <path d="M8 5l2.500-3L13 5M8 16l2.500 3 2.500-3M5 8l-3 2.500L5 13M16 8l3 2.500-3 2.500" stroke="#777" />
        </Icon>
      </button>
    </div>
  </footer>
);

const App = () => (
  <div className="flex min-h-screen flex-col bg-[#e6e6e6] font-['Noto_Sans_CJK_KR','Noto_Sans',sans-serif] text-[23px]/8 font-[350]">
    <TitleBar />
    <div className="flex border-b border-[#d2d2d2] bg-[#f1f1f1] py-1">
      <ClipboardGroup />
      <SlidesGroup />
      <FontGroup />
      <ParagraphGroup />
      <DrawingGroup />
      <EditingGroup />
      <button className="mb-[5px] ml-auto mr-5 self-end" aria-label="리본 메뉴 축소">
        <Icon w={17} h={12}>
          <path d="M2 10l6.500-7L15 10" stroke="#777" strokeWidth="3" />
        </Icon>
      </button>
    </div>
    <div className="flex flex-1">
      <Thumbnails />
      <Workspace />
    </div>
    <StatusBar />
  </div>
);

export default App;
